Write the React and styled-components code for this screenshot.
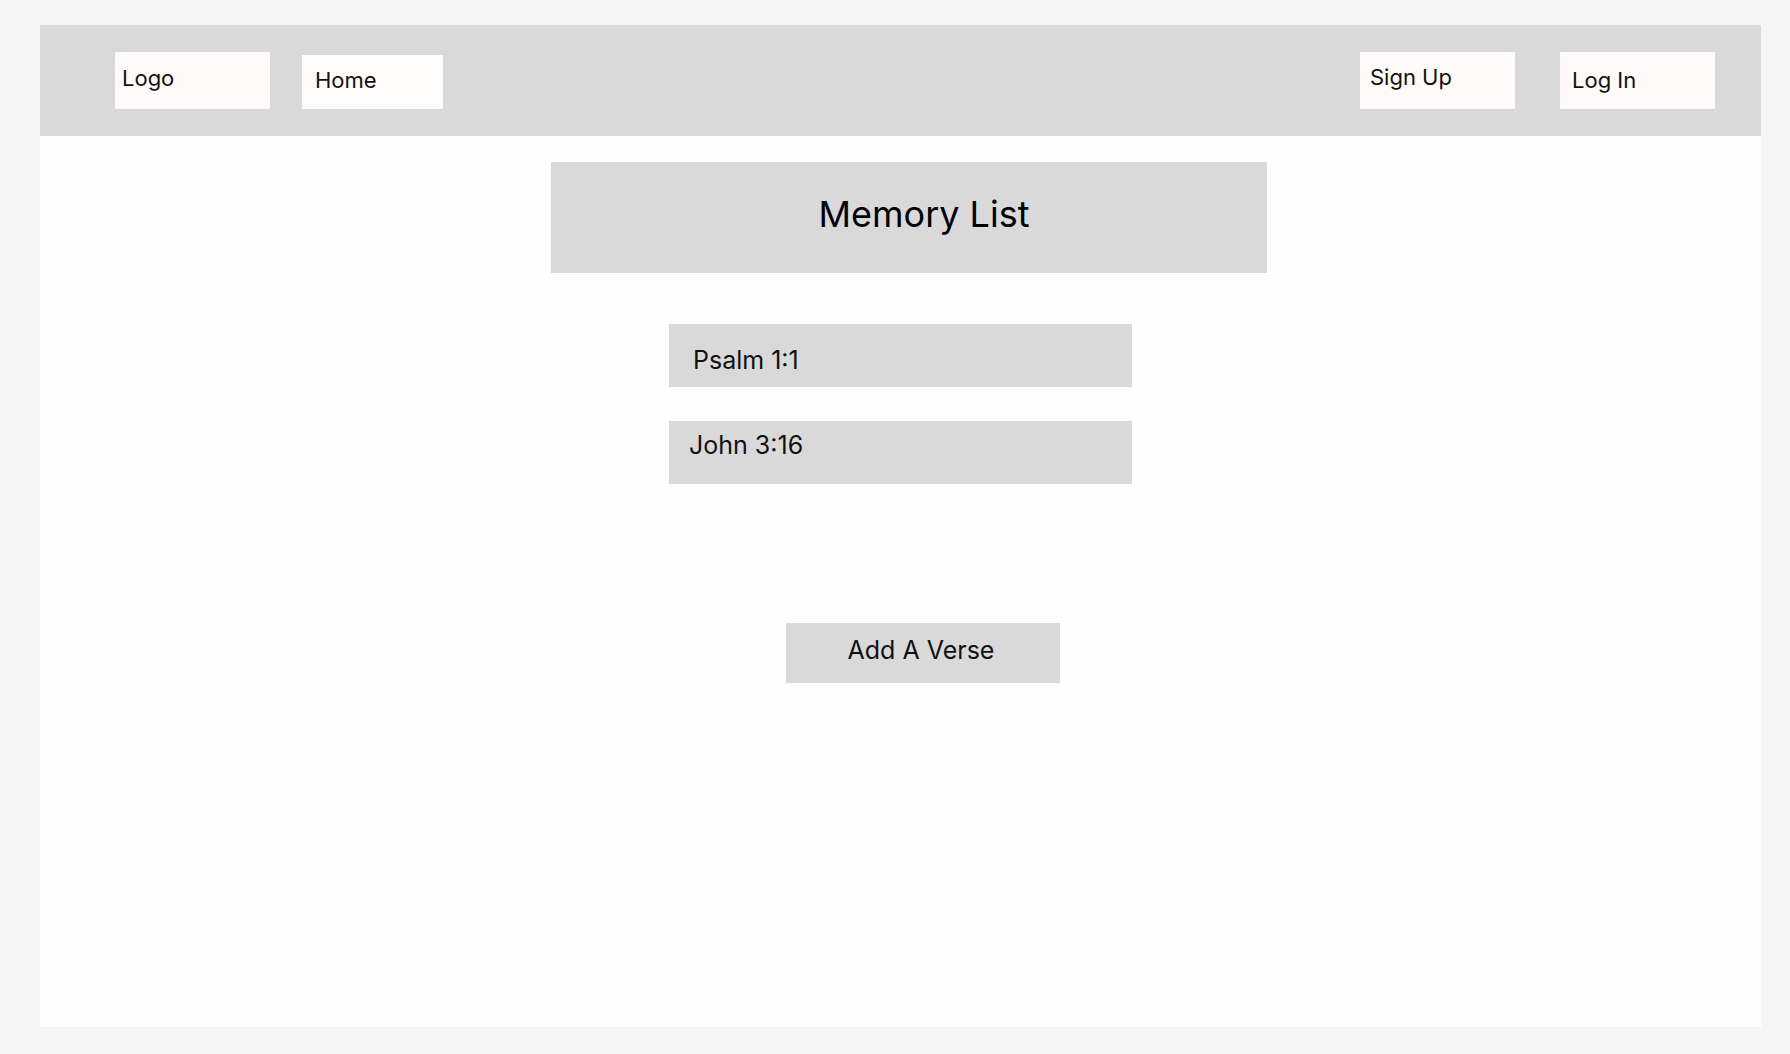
import React from "react";
import styled, { createGlobalStyle } from "styled-components";

const GlobalStyle = createGlobalStyle`
  *, *::before, *::after { box-sizing: border-box; }
  body {
    margin: 0;
    background: #f5f5f5;
    color: #111;
    font-family: Inter, "Liberation Sans", sans-serif;
  }
`;

const Page = styled.div`
  min-height: 100vh;
  display: flex;
  flex-direction: column;
  padding: 25px 29px 27px 40px;
`;

const Frame = styled.div`
  flex: 1;
  background: #fefefe;
`;

const Header = styled.header`
  display: flex;
  flex-wrap: wrap;
  align-items: flex-end;
  justify-content: space-between;
  gap: 32px;
  padding: 27px 46px 27px 75px;
  background: #d9d9d9;
`;

const NavGroup = styled.nav`
  display: flex;
  align-items: flex-end;
  gap: ${({ $gap }) => $gap}px;
`;

const NavLink = styled.a`
  width: ${({ $compact }) => ($compact ? 141 : 155)}px;
  height: ${({ $compact }) => ($compact ? 54 : 57)}px;
  padding: ${({ $pad }) => $pad};
  background: ${({ $compact }) => ($compact ? "#fdfcfa" : "#fefaf9")};
  color: inherit;
  font-size: 22px;
  line-height: 28px;
  text-decoration: none;
  white-space: nowrap;
`;

const Main = styled.main`
  display: flex;
  flex-direction: column;
  align-items: center;
  padding: 26px 0;
`;

const Banner = styled.div`
  width: 100%;
  max-width: 716px;
  margin-left: 16px;
  padding: 30px 0 37px 31px;
  background: #d9d9d9;
`;

const Title = styled.h1`
  margin: 0;
  color: #000;
  font-size: 36px;
  font-weight: 400;
  line-height: 44px;
  text-align: center;
`;

const VerseList = styled.ul`
  display: flex;
  flex-direction: column;
  gap: 34px;
  width: 100%;
  max-width: 463px;
  margin: 51px 0 139px;
  padding: 0;
  list-style: none;
`;

const Verse = styled.li`
  height: 63px;
  padding: ${({ $pad }) => $pad};
  background: #d9d9d9;
  font-size: 25px;
  line-height: 32px;
`;

const AddButton = styled.button`
  width: 274px;
  margin-left: 45px;
  padding: 11px 4px 17px 0;
  border: 0;
  background: #d9d9d9;
  color: inherit;
  font-family: inherit;
  font-size: 25px;
  line-height: 32px;
  text-align: center;
  cursor: pointer;
`;

export default function App() {
  return (
    <>
      <GlobalStyle />
      <Page>
        <Frame>
          <Header>
            <NavGroup $gap={32} aria-label="Main">
              <NavLink href="#" $pad="12px 7px">Logo</NavLink>
              <NavLink href="#home" $compact $pad="11px 13px">Home</NavLink>
            </NavGroup>
            <NavGroup $gap={45} aria-label="Account">
              <NavLink href="#signup" $pad="11px 10px">Sign Up</NavLink>
              <NavLink href="#login" $pad="14px 12px">Log In</NavLink>
            </NavGroup>
          </Header>
          <Main>
            <Banner>
              <Title>Memory List</Title>
            </Banner>
            <VerseList>
              <Verse $pad="20px 24px">Psalm 1:1</Verse>
              <Verse $pad="8px 20px">John 3:16</Verse>
            </VerseList>
            <AddButton type="button">Add A Verse</AddButton>
          </Main>
        </Frame>
      </Page>
    </>
  );
}
